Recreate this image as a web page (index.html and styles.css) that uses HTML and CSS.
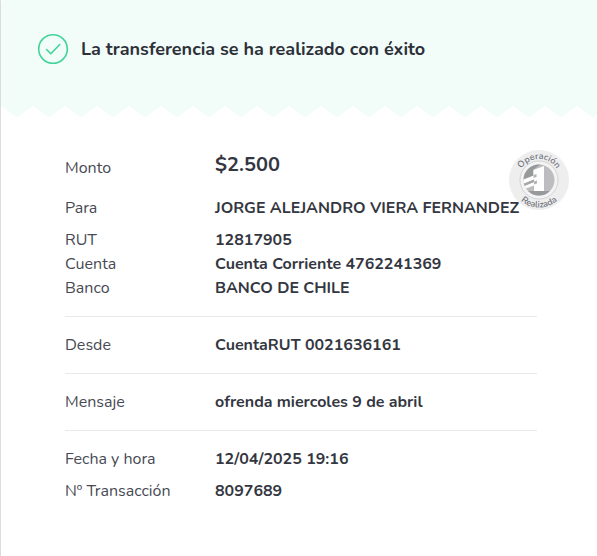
FILE: index.html
```html
<!DOCTYPE html>
<html lang="es">
<head>
<meta charset="utf-8">
<meta name="viewport" content="width=device-width, initial-scale=1">
<title>Comprobante de transferencia</title>
<link rel="stylesheet" href="styles.css">
</head>
<body>
<main class="receipt">
  <header class="banner">
    <svg class="banner-icon" viewBox="0 0 32 32" aria-hidden="true">
      <circle cx="16" cy="16" r="14.3"/>
      <path d="M9.6 16.5l4.2 4.3 9-9.3"/>
    </svg>
    <h1 class="banner-title">La transferencia se ha realizado con éxito</h1>
  </header>
  <svg class="zigzag" aria-hidden="true">
    <defs>
      <pattern id="teeth" width="32" height="12" patternUnits="userSpaceOnUse">
        <path d="M0 0h32L16 11.5z"/>
      </pattern>
    </defs>
    <rect width="100%" height="12" fill="url(#teeth)"/>
  </svg>
  <section class="details">
    <svg class="seal" viewBox="0 0 60 60" role="img" aria-label="Operación Realizada">
      <defs>
        <path id="arc-top" d="M9 30a21 21 0 0 1 42 0"/>
        <path id="arc-bottom" d="M2.500 30a27.500 27.500 0 0 0 55 0"/>
        <clipPath id="disc"><circle cx="30" cy="30" r="15.5"/></clipPath>
      </defs>
      <circle class="seal-base" cx="30" cy="30" r="30"/>
      <circle class="seal-ring" cx="30" cy="30" r="19"/>
      <g clip-path="url(#disc)">
        <path fill="#bdbdbf" d="M14 14h32v32H14z"/>
        <path fill="#98999b" d="M14 14h18L24 20v6L14 29zM14 41h32v8H14z"/>
        <path fill="#fff" d="M24.500 20L35 16V41H25v-5.500L14 39.500v-3l11-4.500v-2.500L14 34v-4l10.500-4.500z"/>
        <path fill="#a6a7a9" d="M14 34l11-4.500V32L14 36.500z"/>
        <path fill="#b4b5b7" d="M24.500 25l3-1v3l-3 1zM25 31.500l3-1v3l-3 1z"/>
      </g>
      <text class="seal-text"><textPath href="#arc-top" startOffset="50%">Operación</textPath></text>
      <text class="seal-text"><textPath href="#arc-bottom" startOffset="50%">Realizada</textPath></text>
    </svg>
    <dl class="group">
      <div class="row row-amount"><dt>Monto</dt><dd class="amount">$2.500</dd></div>
      <div class="row row-payee"><dt>Para</dt><dd>JORGE ALEJANDRO VIERA FERNANDEZ</dd></div>
      <div class="row"><dt>RUT</dt><dd>12817905</dd></div>
      <div class="row"><dt>Cuenta</dt><dd>Cuenta Corriente 4762241369</dd></div>
      <div class="row"><dt>Banco</dt><dd>BANCO DE CHILE</dd></div>
    </dl>
    <dl class="group">
      <div class="row"><dt>Desde</dt><dd>CuentaRUT 0021636161</dd></div>
    </dl>
    <dl class="group">
      <div class="row"><dt>Mensaje</dt><dd>ofrenda miercoles 9 de abril</dd></div>
    </dl>
    <dl class="group">
      <div class="row row-date"><dt>Fecha y hora</dt><dd>12/04/2025 19:16</dd></div>
      <div class="row"><dt>Nº Transacción</dt><dd>8097689</dd></div>
    </dl>
  </section>
</main>
</body>
</html>
```
FILE: styles.css
```css
* {
  box-sizing: border-box;
}

body {
  margin: 0;
  background: #fff;
  color: #343741;
  font-family: Nunito, "Open Sans", sans-serif;
  font-size: 16px;
  line-height: 24px;
}

.receipt {
  min-height: 100vh;
  border-left: 1px solid #dcdcdc;
}

.banner {
  display: flex;
  align-items: center;
  gap: 12px;
  padding: 33px 36px 41px;
  border-top-left-radius: 4px;
  background: #f2fdf9;
}

.banner-icon {
  flex: none;
  width: 32px;
  height: 32px;
  fill: none;
  stroke: #41d49a;
  stroke-width: 1.6;
  stroke-linecap: round;
  stroke-linejoin: round;
}

.banner-title {
  margin: 0;
  color: #2d3038;
  font-size: 18px;
  font-weight: 700;
  line-height: 24px;
}

.zigzag {
  display: block;
  width: 100%;
  height: 12px;
  fill: #f2fdf9;
}

.details {
  position: relative;
  padding: 32px 60px 32px 64px;
}

.seal {
  position: absolute;
  top: 32px;
  right: 28px;
  width: 60px;
  height: 60px;
}

.seal-base {
  fill: #eeeeef;
}

.seal-ring {
  fill: #f4f4f5;
  stroke: #d2d2d4;
  stroke-width: 1;
}

.seal-text {
  fill: #70727b;
  font-size: 9px;
  font-weight: 600;
  text-anchor: middle;
}

.group {
  margin: 0;
  padding: 16px 0;
  border-bottom: 1px solid #e9e9ea;
}

.group:first-of-type {
  padding-top: 0;
}

.group:last-child {
  border-bottom: 0;
}

.row {
  display: grid;
  grid-template-columns: 150px 1fr;
}

.row-amount {
  align-items: end;
  margin-bottom: 16px;
}

.row-payee,
.row-date {
  margin-bottom: 8px;
}

dt,
dd {
  margin: 0;
}

dt {
  color: #474a54;
  font-weight: 400;
}

dd {
  position: relative;
  font-weight: 700;
  white-space: nowrap;
}

.amount {
  font-size: 20px;
  line-height: 30px;
}
```
